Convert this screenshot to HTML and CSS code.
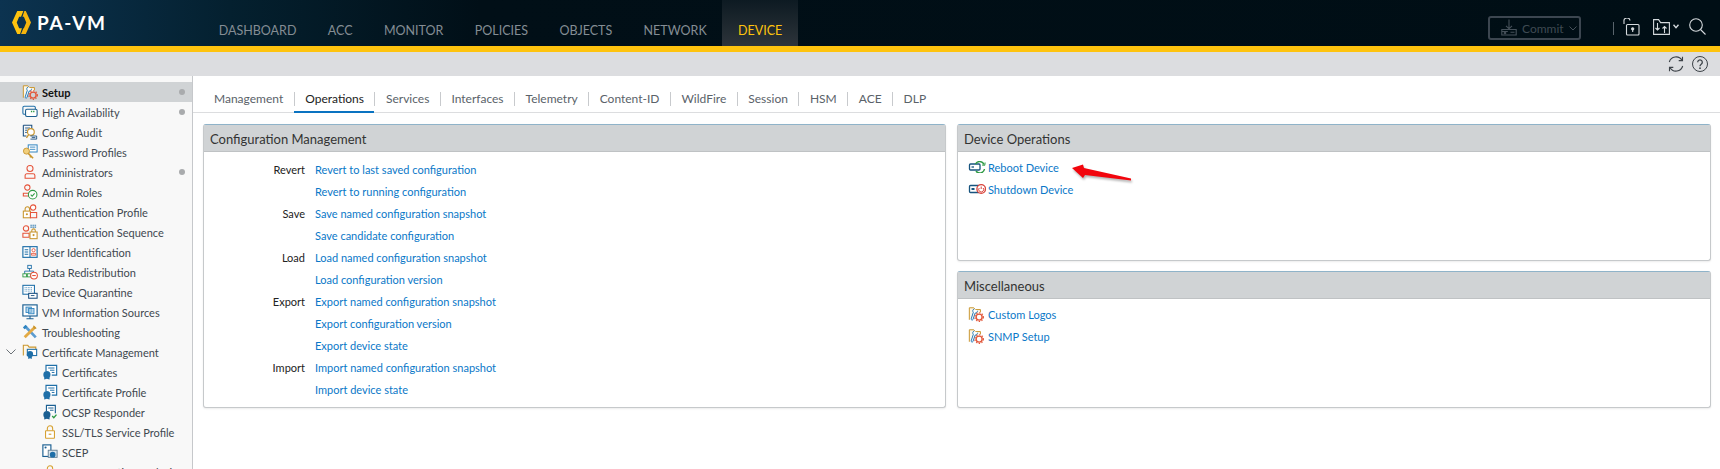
FILE: index.html
```html
<!DOCTYPE html>
<html lang="en">
<head>
  <meta charset="UTF-8" />
  <title>PA-VM</title>
  <link rel="stylesheet" href="styles.css">
</head>
<body>
  <svg class="sprites" width="0" height="0">
    <symbol id="i-setup" viewBox="0 0 18 18">
      <path d="M1.500 15.500V2h5l1.500 2h6v3" fill="#fdf7e8" stroke="#c9962f" stroke-width="1.100"/>
      <path d="M7 3.500C5 4 5 6 6 7L3.600 14.500c-.3 1.200 1.400 1.900 2 .7L8 8c1.500 0 2.600-1 2.700-2.600" fill="#fff" stroke="#1f78b8" stroke-width="1.100"/>
      <circle cx="12.500" cy="12.500" r="3.400" fill="none" stroke="#e2573b" stroke-width="1.600"/>
      <circle cx="12.500" cy="12.500" r="4.900" fill="none" stroke="#e2573b" stroke-width="1.200" stroke-dasharray="1.600 1.600"/>
    </symbol>
    <symbol id="i-ha" viewBox="0 0 18 18">
      <rect x="1" y="2.500" width="14" height="9" rx="1.500" fill="none" stroke="#1f6fa8" stroke-width="1.200"/>
      <rect x="4" y="6" width="13" height="8" rx="1.500" fill="#fff" stroke="#1d5f8f" stroke-width="1.200"/>
      <path d="M10 8.500h1.500M12.500 8.500H14" stroke="#2f9a44" stroke-width="1.600"/>
    </symbol>
    <symbol id="i-audit" viewBox="0 0 18 18">
      <path d="M1.500 1.500H11v5M1.500 1.500v12H5" fill="none" stroke="#1b4f80" stroke-width="1.200"/>
      <path d="M3.500 4.500H9M3.500 7H6M3.500 9.500H5.500" stroke="#1b4f80"/>
      <circle cx="10" cy="9" r="3.800" fill="#fff" stroke="#c9962f" stroke-width="1.300"/>
      <path d="M7.500 12 5 15.500" stroke="#c9962f" stroke-width="1.500"/>
      <path d="M9.500 13.500h7v3.500h-7M11 15.300h4" fill="none" stroke="#1b4f80"/>
    </symbol>
    <symbol id="i-password" viewBox="0 0 18 18">
      <rect x="7" y="1" width="10" height="8" fill="#fff" stroke="#2d83c0" stroke-width="1.100"/>
      <path d="M9 3.500h6M9 6h6" stroke="#2d83c0"/>
      <circle cx="5" cy="8" r="3.400" fill="#f2cf7c" stroke="#c9962f"/>
      <path d="m7 10.500 5.500 5.500m-2.500-2.500L9 15" stroke="#c9962f" stroke-width="1.800" fill="none"/>
    </symbol>
    <symbol id="i-admin" viewBox="0 0 18 18">
      <circle cx="9" cy="5" r="3.400" fill="none" stroke="#e5533a" stroke-width="1.200"/>
      <path d="M3.500 16v-3a2 2 0 0 1 2-2h7a2 2 0 0 1 2 2v3z" fill="none" stroke="#e5533a" stroke-width="1.200"/>
    </symbol>
    <symbol id="i-roles" viewBox="0 0 18 18">
      <circle cx="6" cy="4" r="3" fill="none" stroke="#e5533a" stroke-width="1.200"/>
      <path d="M1.500 13.500v-3h8v3z" fill="none" stroke="#e5533a" stroke-width="1.200"/>
      <circle cx="12" cy="12" r="4.800" fill="#fff" stroke="#2f9a44" stroke-width="1.200"/>
      <path d="m9.800 12 1.600 1.800 2.800-3.300" fill="none" stroke="#2f9a44" stroke-width="1.200"/>
    </symbol>
    <symbol id="i-authprofile" viewBox="0 0 18 18">
      <path d="M3.500 8V5.500a2.500 2.500 0 0 1 5 0V8" fill="none" stroke="#c9962f" stroke-width="1.200"/>
      <rect x="1.500" y="8" width="8" height="7.500" fill="#fff" stroke="#c9962f" stroke-width="1.200"/>
      <circle cx="5.500" cy="11.500" r="1.200" fill="#c9962f"/>
      <circle cx="12.500" cy="4" r="3" fill="#fff" stroke="#e5533a" stroke-width="1.200"/>
      <path d="M9.500 15.500V9.500h7v6z" fill="none" stroke="#e5533a" stroke-width="1.200"/>
    </symbol>
    <symbol id="i-authseq" viewBox="0 0 18 18">
      <circle cx="4.500" cy="5" r="3" fill="none" stroke="#e5533a" stroke-width="1.200"/>
      <path d="M1 15v-4.500h7V15z" fill="none" stroke="#e5533a" stroke-width="1.200"/>
      <path d="M9.500 1.500h7M9.500 3.500h7" stroke="#1f6fa8" stroke-width="1.200" stroke-dasharray="1.500 .8"/>
      <path d="M11 9V7.500a2 2 0 0 1 4 0V9" fill="none" stroke="#c9962f" stroke-width="1.200"/>
      <rect x="9" y="9" width="8" height="7.500" fill="#fff" stroke="#c9962f" stroke-width="1.200"/>
      <circle cx="13" cy="12.500" r="1.200" fill="#c9962f"/>
    </symbol>
    <symbol id="i-userid" viewBox="0 0 18 18">
      <rect x="1" y="3" width="16" height="12" fill="#fff" stroke="#1f6fa8" stroke-width="1.300"/>
      <path d="M9 3v12M3 6.500h4M3 9h4M3 11.500h4" stroke="#1f6fa8" stroke-width="1.200"/>
      <circle cx="13" cy="7" r="1.800" fill="none" stroke="#e5533a"/>
      <path d="M10.500 12.500v-2h5v2z" fill="none" stroke="#e5533a"/>
    </symbol>
    <symbol id="i-redist" viewBox="0 0 18 18">
      <rect x="6.500" y="1.500" width="4" height="3.500" fill="none" stroke="#1f6fa8"/>
      <path d="M8.500 5v3M3 11V8h10v2" fill="none" stroke="#1f6fa8"/>
      <rect x="1" y="11" width="4" height="3.500" fill="none" stroke="#2f9a44"/>
      <rect x="6" y="11" width="3.500" height="3.500" fill="none" stroke="#2f9a44"/>
      <circle cx="13.500" cy="13" r="3.800" fill="#fff" stroke="#e5533a" stroke-width="1.200"/>
      <path d="M11.500 13h4" stroke="#e5533a" stroke-width="1.200"/>
    </symbol>
    <symbol id="i-quarantine" viewBox="0 0 18 18">
      <rect x="1" y="1.500" width="13" height="10" fill="#fff" stroke="#1f6fa8" stroke-width="1.200"/>
      <path d="M3 4h9M3 6h9M3 8h9" stroke="#4d8fbd" stroke-dasharray="1 .8"/>
      <rect x="7.500" y="10.500" width="9.500" height="5.500" fill="#fff" stroke="#1b4f80" stroke-width="1.200"/>
      <path d="M10 13h4" stroke="#1b4f80"/>
    </symbol>
    <symbol id="i-vm" viewBox="0 0 18 18">
      <rect x="1" y="1" width="16" height="12.500" fill="#fff" stroke="#1b5f92" stroke-width="1.300"/>
      <path d="M9 13.500V16M5 16.500h8" stroke="#1b5f92" stroke-width="1.200"/>
      <rect x="4.500" y="3.500" width="6" height="6" fill="#bcd9ec" stroke="#2d83c0"/>
      <rect x="7.500" y="5" width="6" height="6" fill="#9cc6e2" fill-opacity=".7" stroke="#2d83c0"/>
    </symbol>
    <symbol id="i-trouble" viewBox="0 0 18 18">
      <path d="M3 2 15.500 15" stroke="#5a9bd0" stroke-width="3"/>
      <path d="M15 3 3 15" stroke="#e3aa45" stroke-width="3.200"/>
      <path d="m1 4 3-3 2 2-3 3z" fill="#2d83c0"/>
      <path d="M13 1.500 16.500 5 14 5.500 12.500 4z" fill="#c9962f"/>
    </symbol>
    <symbol id="i-certfolder" viewBox="0 0 18 18">
      <path d="M1.500 13V1.500h5l1.500 2h7.500V6" fill="#fdf7e8" stroke="#c9962f" stroke-width="1.200"/>
      <rect x="6" y="6" width="10.500" height="7" fill="#fff" stroke="#1f6fa8" stroke-width="1.200"/>
      <circle cx="9" cy="11.500" r="3.500" fill="#1f6fa8"/>
      <path d="M7 14.500v2.500l2-1 2 1v-2.500" fill="#1f6fa8"/>
    </symbol>
    <symbol id="i-cert" viewBox="0 0 18 18">
      <path d="M4.500 8V1.500h12v11H11" fill="#fff" stroke="#1f6fa8" stroke-width="1.300"/>
      <path d="M7 4.500h7M9 7h5M11 9.500h3" stroke="#1f6fa8" stroke-width="1.100"/>
      <circle cx="5.500" cy="12" r="4" fill="#1f6fa8"/>
      <path d="M2.500 15v2.500l3-1 3 1V15" fill="#1f6fa8"/>
    </symbol>
    <symbol id="i-ocsp" viewBox="0 0 18 18">
      <path d="M5 8V1.500h10v9" fill="#fff" stroke="#1b5f92" stroke-width="1.300"/>
      <path d="M7 4.500h6M9 7h4" stroke="#1b5f92" stroke-width="1.100"/>
      <circle cx="5.500" cy="12" r="4" fill="#1b5f92"/>
      <path d="M2.500 15v2.500l3-1 3 1V15" fill="#1b5f92"/>
      <path d="m11.500 13.500 1.800 2 3-3.500" fill="none" stroke="#2f9a44" stroke-width="1.500"/>
    </symbol>
    <symbol id="i-ssl" viewBox="0 0 18 18">
      <path d="M6 7.500V5a3 3 0 0 1 6 0v2.500" fill="none" stroke="#d6a030" stroke-width="1.200"/>
      <rect x="4" y="7.500" width="10" height="8.500" rx=".5" fill="#fff" stroke="#d6a030" stroke-width="1.200"/>
      <path d="M7.500 11.500h3" stroke="#d6a030" stroke-width="1.300"/>
    </symbol>
    <symbol id="i-scep" viewBox="0 0 18 18">
      <rect x="1" y="1" width="9" height="13" fill="#fff" stroke="#1b5f92" stroke-width="1.300"/>
      <circle cx="4" cy="4" r="1.200" fill="#1b5f92"/>
      <rect x="7" y="7" width="10" height="8" fill="#dbe6ee" stroke="#5f7b90"/>
      <circle cx="12" cy="12" r="3.200" fill="#1f6fa8"/>
    </symbol>
    <symbol id="i-reboot" viewBox="0 0 18 12">
      <rect x="1.500" y="3" width="10.500" height="6" rx="1" fill="#fff" stroke="#17547f" stroke-width="1.300"/>
      <path d="M3.500 6h2.500" stroke="#17547f" stroke-width="1.300"/>
      <path d="M7.500 3A4.700 4.700 0 0 1 16 3.500M16.500 8a4.700 4.700 0 0 1-8.500 2" fill="none" stroke="#2f9a44" stroke-width="1.400"/>
      <path d="m14 4 2.800.3.300-2.800" fill="none" stroke="#2f9a44"/>
    </symbol>
    <symbol id="i-shutdown" viewBox="0 0 18 12">
      <rect x="1.500" y="2.500" width="10" height="7" rx="1" fill="#fff" stroke="#17547f" stroke-width="1.300"/>
      <path d="M3.500 5h3v2h-3z" fill="#17547f"/>
      <circle cx="13.200" cy="6" r="4.300" fill="#fff" stroke="#d8423a" stroke-width="1.300"/>
      <path d="M13.200 3.500V6M11.200 5a2.500 2.500 0 1 0 4 0" fill="none" stroke="#d8423a"/>
    </symbol>
  </svg>

  <!-- top bar -->
  <header class="topbar">
    <div class="brand">
      <svg class="brand-mark" viewBox="0 0 20 24">
        <path d="M5.500 0H12L9.500 6H7.500L5 12l2.500 6H10.500L8.500 24h-3L0 12z" fill="#fec30e"/>
        <path d="M13 0h1.500L20 12l-5.500 12H9.500L12 18h.5L15 12l-2.500-6H11z" fill="#f6b40c"/>
      </svg>
      <span class="brand-name">PA-VM</span>
    </div>
    <nav class="nav">
      <a class="nav-item">Dashboard</a>
      <a class="nav-item">ACC</a>
      <a class="nav-item">Monitor</a>
      <a class="nav-item">Policies</a>
      <a class="nav-item">Objects</a>
      <a class="nav-item">Network</a>
      <a class="nav-item active">Device</a>
    </nav>
    <div class="top-tools">
      <button class="commit">
        <svg width="16" height="18" viewBox="0 0 16 18" fill="none" stroke="#46515a" stroke-width="1.100"><path d="M8 .5v9M5 6.800l3 3 3-3M.8 10.500h14.400v5.500H.8zM.8 12.500h6M9.500 13.300h4"/><circle cx="4" cy="14" r=".8"/></svg>
        <span>Commit</span>
        <svg width="8" height="5" viewBox="0 0 8 5" fill="none" stroke="#46515a"><path d="m.5.500 3.500 3.500 3.500-3.500"/></svg>
      </button>
      <span class="tool-sep"></span>
      <svg class="lock" width="17" height="18" viewBox="0 0 17 18" fill="none" stroke="#d5dadd" stroke-width="1.100"><path d="M1 6V3.500a3 3 0 0 1 6-1"/><rect x="3.500" y="6.500" width="12.500" height="10.500" rx="1"/><circle cx="9.700" cy="10.800" r="1.100" fill="#d5dadd"/><path d="M9.700 11v3"/></svg>
      <svg class="folder" width="17" height="16" viewBox="0 0 17 16" fill="none" stroke="#d5dadd" stroke-width="1.100"><path d="M.6 15.400V.6h5l2 3h8.800v11.800z"/><path d="M4.500 4v7M2.500 9l2 2 2-2M11.500 14V7.500M9.500 9.500l2-2 2 2"/></svg>
      <svg class="caret" width="6" height="5" viewBox="0 0 6 5" fill="none" stroke="#d5dadd" stroke-width="1.400"><path d="m.5.800 2.500 2.800L5.500.8"/></svg>
      <svg class="search" width="17" height="17" viewBox="0 0 17 17" fill="none" stroke="#d5dadd" stroke-width="1.100"><circle cx="7" cy="7" r="6.300"/><path d="m11.500 11.500 5 5"/></svg>
    </div>
  </header>
  <div class="accent"></div>
  <div class="subbar">
    <svg width="16" height="16" viewBox="0 0 16 16" fill="none" stroke="#3c4248" stroke-width="1.100"><path d="M1.300 6A7 7 0 0 1 14 4.200M14.700 10A7 7 0 0 1 2 11.800"/><path d="M14.500.8v3.800h-3.800M1.500 15.200v-3.800h3.800"/></svg>
    <svg width="16" height="16" viewBox="0 0 16 16" fill="none" stroke="#3c4248" stroke-width="1"><circle cx="8" cy="8" r="7.500"/><path d="M5.700 6.200a2.300 2.300 0 1 1 3.500 2C8.300 8.800 8 9.200 8 10.200" stroke-width="1.300"/><circle cx="8" cy="12.200" r=".9" fill="#3c4248" stroke="none"/></svg>
  </div>

  <div class="layout">
    <!-- left tree -->
    <aside class="sidebar">
      <div class="tree-row selected"><svg class="tree-icon"><use href="#i-setup"/></svg><span>Setup</span><i class="dot"></i></div>
      <div class="tree-row"><svg class="tree-icon"><use href="#i-ha"/></svg><span>High Availability</span><i class="dot"></i></div>
      <div class="tree-row"><svg class="tree-icon"><use href="#i-audit"/></svg><span>Config Audit</span></div>
      <div class="tree-row"><svg class="tree-icon"><use href="#i-password"/></svg><span>Password Profiles</span></div>
      <div class="tree-row"><svg class="tree-icon"><use href="#i-admin"/></svg><span>Administrators</span><i class="dot"></i></div>
      <div class="tree-row"><svg class="tree-icon"><use href="#i-roles"/></svg><span>Admin Roles</span></div>
      <div class="tree-row"><svg class="tree-icon"><use href="#i-authprofile"/></svg><span>Authentication Profile</span></div>
      <div class="tree-row"><svg class="tree-icon"><use href="#i-authseq"/></svg><span>Authentication Sequence</span></div>
      <div class="tree-row"><svg class="tree-icon"><use href="#i-userid"/></svg><span>User Identification</span></div>
      <div class="tree-row"><svg class="tree-icon"><use href="#i-redist"/></svg><span>Data Redistribution</span></div>
      <div class="tree-row"><svg class="tree-icon"><use href="#i-quarantine"/></svg><span>Device Quarantine</span></div>
      <div class="tree-row"><svg class="tree-icon"><use href="#i-vm"/></svg><span>VM Information Sources</span></div>
      <div class="tree-row"><svg class="tree-icon"><use href="#i-trouble"/></svg><span>Troubleshooting</span></div>
      <div class="tree-row parent">
        <svg class="tree-toggle" width="10" height="6" viewBox="0 0 10 6" fill="none" stroke="#6b7177"><path d="m.5.500 4.500 4.500L9.500.5"/></svg>
        <svg class="tree-icon"><use href="#i-certfolder"/></svg><span>Certificate Management</span>
      </div>
      <div class="tree-row child"><svg class="tree-icon"><use href="#i-cert"/></svg><span>Certificates</span></div>
      <div class="tree-row child"><svg class="tree-icon"><use href="#i-cert"/></svg><span>Certificate Profile</span></div>
      <div class="tree-row child"><svg class="tree-icon"><use href="#i-ocsp"/></svg><span>OCSP Responder</span></div>
      <div class="tree-row child"><svg class="tree-icon"><use href="#i-ssl"/></svg><span>SSL/TLS Service Profile</span></div>
      <div class="tree-row child"><svg class="tree-icon"><use href="#i-scep"/></svg><span>SCEP</span></div>
      <div class="tree-row child"><svg class="tree-icon"><use href="#i-ssl"/></svg><span>SSL Decryption Exclusion</span></div>
    </aside>

    <main class="content">
      <div class="tabs">
        <a class="tab">Management</a>
        <a class="tab active">Operations</a>
        <a class="tab">Services</a>
        <a class="tab">Interfaces</a>
        <a class="tab">Telemetry</a>
        <a class="tab">Content-ID</a>
        <a class="tab">WildFire</a>
        <a class="tab">Session</a>
        <a class="tab">HSM</a>
        <a class="tab">ACE</a>
        <a class="tab">DLP</a>
      </div>

      <div class="panels">
        <section class="panel config-panel">
          <h3 class="panel-title">Configuration Management</h3>
          <div class="op-grid">
            <span class="op-label">Revert</span><a class="link">Revert to last saved configuration</a>
            <span></span><a class="link">Revert to running configuration</a>
            <span class="op-label">Save</span><a class="link">Save named configuration snapshot</a>
            <span></span><a class="link">Save candidate configuration</a>
            <span class="op-label">Load</span><a class="link">Load named configuration snapshot</a>
            <span></span><a class="link">Load configuration version</a>
            <span class="op-label">Export</span><a class="link">Export named configuration snapshot</a>
            <span></span><a class="link">Export configuration version</a>
            <span></span><a class="link">Export device state</a>
            <span class="op-label">Import</span><a class="link">Import named configuration snapshot</a>
            <span></span><a class="link">Import device state</a>
          </div>
        </section>

        <div class="right-col">
          <section class="panel device-panel">
            <h3 class="panel-title">Device Operations</h3>
            <div class="icon-links">
              <a class="link icon-link"><svg class="link-icon" viewBox="0 0 18 12"><use href="#i-reboot"/></svg>Reboot Device</a>
              <a class="link icon-link"><svg class="link-icon" viewBox="0 0 18 12"><use href="#i-shutdown"/></svg>Shutdown Device</a>
            </div>
            <svg class="callout" width="62" height="22" viewBox="0 0 62 22"><path d="M0 6 11 2.500 12 6 59 16.500 59 18.500 13 13 11 16z" fill="#f2050d"/></svg>
          </section>
          <section class="panel misc-panel">
            <h3 class="panel-title">Miscellaneous</h3>
            <div class="icon-links">
              <a class="link icon-link"><svg class="tree-icon"><use href="#i-setup"/></svg>Custom Logos</a>
              <a class="link icon-link"><svg class="tree-icon"><use href="#i-setup"/></svg>SNMP Setup</a>
            </div>
          </section>
        </div>
      </div>
    </main>
  </div>
</body>
</html>
```

FILE: styles.css
```css
* {
  box-sizing: border-box;
}
html, body {
  height: 100%;
}
body {
  margin: 0;
  overflow: hidden;
  display: flex;
  flex-direction: column;
  font-family: Lato, "Open Sans", sans-serif;
  font-size: 11px;
  color: #333;
  background-color: #fff;
}
.sprites {
  position: absolute;
}

/* top bar */
.topbar {
  height: 46px;
  flex: none;
  display: flex;
  background: linear-gradient(90deg, #0c3350 0, #04202f 230px, #010f17 480px, #000e15 100%);
}
.brand {
  width: 203px;
  display: flex;
  align-items: center;
  gap: 6px;
  padding: 0 0 1px 12px;
}
.brand-mark {
  width: 19px;
  height: 23px;
}
.brand-name {
  color: #fff;
  font-size: 19px;
  font-weight: 700;
  letter-spacing: 1.6px;
}
.nav {
  display: flex;
}
.nav-item {
  display: flex;
  align-items: center;
  padding: 14px 15.7px 0;
  font-size: 12.5px;
  text-transform: uppercase;
  color: #848d94;
}
.nav-item.active {
  color: #fec30e;
  background: linear-gradient(180deg, #0d1a22 0, #2d343a 100%);
}
.top-tools {
  margin-left: auto;
  display: flex;
  align-items: center;
  padding-right: 14px;
}
.commit {
  width: 93px;
  height: 24px;
  margin-top: 10px;
  display: flex;
  align-items: center;
  gap: 5px;
  padding: 0 0 0 11px;
  font-family: inherit;
  font-size: 12px;
  color: #3f4a52;
  background: none;
  border: 2px solid #3c4650;
  border-radius: 3px;
}
.tool-sep {
  width: 1px;
  height: 13px;
  margin: 10px 9px 0 32px;
  background-color: #59646c;
}
.lock {
  margin-top: 8px;
}
.folder {
  margin: 8px 0 0 13px;
}
.caret {
  margin: 6px 0 0 3px;
}
.search {
  margin: 7px 0 0 10px;
}
.accent {
  height: 6px;
  flex: none;
  background-color: #fec30e;
}
.subbar {
  height: 24px;
  flex: none;
  display: flex;
  align-items: center;
  justify-content: flex-end;
  gap: 8px;
  padding-right: 12px;
  background-color: #dcdde0;
}

/* sidebar */
.layout {
  flex: 1;
  min-height: 0;
  display: flex;
}
.sidebar {
  width: 193px;
  flex: none;
  overflow: hidden;
  padding-top: 6px;
  background-color: #f8f8f8;
  border-right: 1px solid #c6c8cb;
}
.tree-row {
  height: 20px;
  display: flex;
  align-items: center;
  padding-left: 22px;
  color: #3f4850;
  white-space: nowrap;
}
.tree-row span {
  margin-left: 4px;
}
.tree-row.selected {
  background-color: #d0d3d5;
  color: #111;
  font-weight: 700;
}
.tree-row.child {
  padding-left: 42px;
}
.tree-row.parent {
  padding-left: 6px;
}
.tree-toggle {
  margin-right: 6px;
}
.tree-icon {
  width: 16px;
  height: 16px;
  flex: none;
}
.dot {
  width: 6px;
  height: 6px;
  margin-left: auto;
  margin-right: 7px;
  border-radius: 50%;
  background-color: #a9abad;
}

/* tabs */
.content {
  flex: 1;
  min-width: 0;
}
.tabs {
  height: 37px;
  display: flex;
  align-items: center;
  padding: 10px 0 0 10px;
  border-bottom: 1px solid #dcdddf;
}
.tab {
  position: relative;
  padding: 0 10.5px;
  font-size: 12px;
  line-height: 14px;
  color: #5a6269;
  border-left: 1px solid #c8cacd;
}
.tab:first-child {
  padding-left: 11px;
  border-left: none;
}
.tab.active {
  color: #222;
}
.tab.active::after {
  content: "";
  position: absolute;
  left: -1px;
  right: 0;
  bottom: -7px;
  height: 2px;
  background-color: #0a73c1;
}

/* panels */
.panels {
  display: grid;
  grid-template-columns: 743px 754px;
  gap: 11px;
  padding: 11px 0 0 10px;
}
.right-col {
  display: flex;
  flex-direction: column;
  gap: 10px;
}
.panel {
  position: relative;
  border: 1px solid #c6c9cb;
  border-top-color: #8fb3c9;
  border-radius: 3px;
  background-color: #fff;
  box-shadow: 0 1px 2px rgba(0, 0, 0, 0.08);
}
.config-panel {
  height: 284px;
}
.device-panel,
.misc-panel {
  height: 137px;
}
.panel-title {
  height: 27px;
  margin: 0;
  padding: 0 6px;
  font-size: 13px;
  font-weight: 400;
  line-height: 28px;
  color: #333;
  background-color: #d0d3d5;
  border-bottom: 1px solid #bfc2c4;
}
.op-grid {
  display: grid;
  grid-template-columns: 101px 1fr;
  column-gap: 10px;
  grid-auto-rows: 22px;
  align-items: center;
  padding-top: 6px;
}
.op-label {
  text-align: right;
  color: #222;
}
.link {
  color: #0a78c8;
}
.icon-links {
  display: flex;
  flex-direction: column;
  padding: 4px 0 0 10px;
}
.icon-link {
  height: 22px;
  display: flex;
  align-items: center;
  gap: 2px;
}
.link-icon {
  width: 18px;
  height: 12px;
}
.icon-link .tree-icon {
  margin-right: 2px;
}
.callout {
  position: absolute;
  left: 114px;
  top: 37px;
  filter: drop-shadow(1px 2px 1px rgba(0, 0, 0, 0.3));
}
```
